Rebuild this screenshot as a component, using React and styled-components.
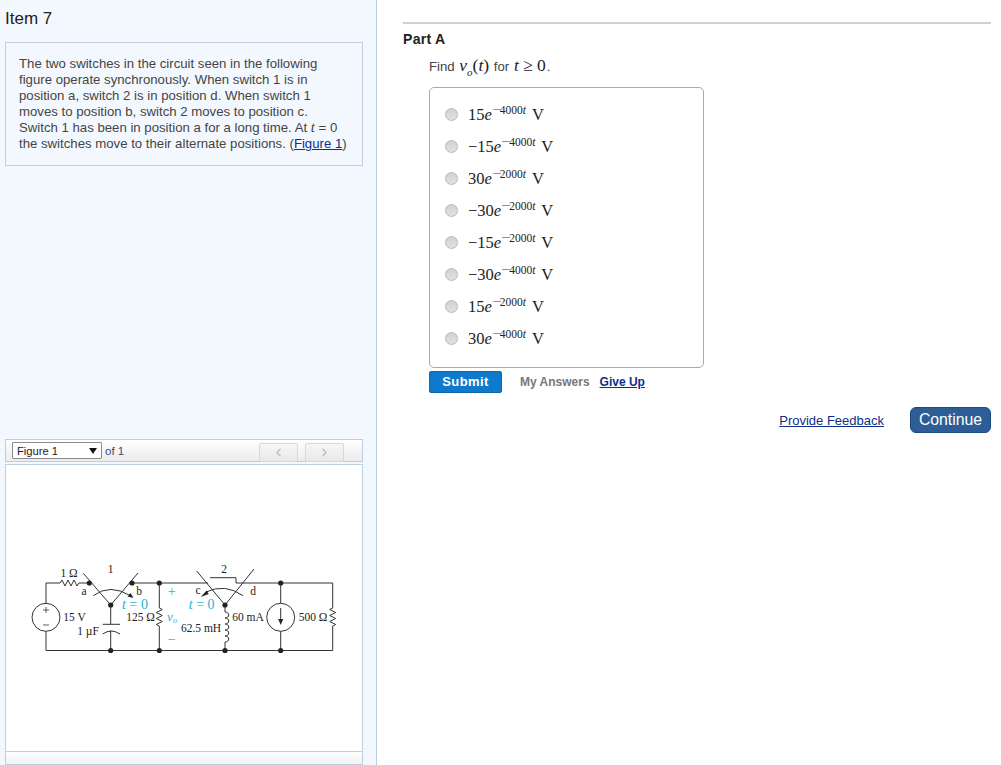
import React from "react";
import styled, { createGlobalStyle } from "styled-components";
import { ChevronLeft, ChevronRight } from "lucide-react";

const Global = createGlobalStyle`
  html, body { margin: 0; padding: 0; background: #fff; }
  body { font-family: "Liberation Sans", Arial, sans-serif; color: #333; }
`;

const Page = styled.div`
  display: flex;
  width: 1001px;
  height: 765px;
  overflow: hidden;
`;

const Sidebar = styled.aside`
  display: flex;
  flex-direction: column;
  flex: none;
  box-sizing: border-box;
  width: 377px;
  height: 765px;
  padding: 0 13px 0 5px;
  background: #f3f8ff;
  border-right: 1px solid #bccfe0;
  overflow: hidden;
`;

const ItemTitle = styled.h1`
  margin: 0;
  height: 42px;
  padding-top: 9px;
  box-sizing: border-box;
  font-size: 17px;
  line-height: 20px;
  font-weight: normal;
  color: #222;
`;

const ProblemBox = styled.div`
  box-sizing: border-box;
  height: 124px;
  padding: 13px 13px 0;
  border: 1px solid #bccfe0;
  font-size: 13.2px;
  line-height: 16px;
  color: #444;
  white-space: nowrap;
`;

const Link = styled.a`
  color: #0b2f8a;
  text-decoration: underline;
  font-weight: ${(p) => (p.$bold ? "bold" : "normal")};
  font-size: ${(p) => p.$size || "inherit"};
`;

const Toolbar = styled.div`
  display: flex;
  align-items: center;
  box-sizing: border-box;
  height: 23px;
  margin-top: 273px;
  padding: 0 0 0 6px;
  border: 1px solid #bccfe0;
  background: linear-gradient(#fff, #ececec);
  font-size: 11.5px;
  color: #3c4a78;
`;

const FigureSelect = styled.div`
  display: flex;
  align-items: center;
  justify-content: space-between;
  box-sizing: border-box;
  width: 90px;
  height: 17px;
  padding: 0 4px 0 4px;
  margin-right: 3px;
  background: #fff;
  border: 1px solid #8a8a8a;
  border-radius: 1px;
  color: #222;
  font-size: 11.2px;
`;

const Caret = styled.span`
  width: 0;
  height: 0;
  border-left: 4px solid transparent;
  border-right: 4px solid transparent;
  border-top: 6px solid #111;
`;

const Pager = styled.div`
  display: flex;
  gap: 7px;
  margin-left: auto;
  margin-right: 18px;
  align-self: flex-start;
  margin-top: 3px;
`;

const PagerButton = styled.div`
  display: flex;
  align-items: center;
  justify-content: center;
  box-sizing: border-box;
  width: 39px;
  height: 19px;
  border: 1px solid #d8d8d8;
  border-radius: 2px;
  background: linear-gradient(#f6f6f6, #e9e9e9);
  color: #bdbdbd;
`;

const FigurePanel = styled.div`
  display: flex;
  flex: none;
  box-sizing: border-box;
  height: 288px;
  margin-top: 2px;
  padding: 90px 0 0 24px;
  background: #fff;
  border: 1px solid #bccfe0;
`;

const FigureFooter = styled.div`
  flex: 1;
  border: 1px solid #bccfe0;
  border-top: none;
  background: linear-gradient(#fff, #f1f1f1);
`;

const Main = styled.main`
  flex: 1;
  min-width: 0;
  padding: 22px 10px 0 26px;
`;

const PartHeader = styled.h2`
  margin: 0;
  padding-top: 7px;
  border-top: 2px solid #cfcfcf;
  font-size: 14px;
  line-height: 16px;
  font-weight: bold;
  letter-spacing: 0.3px;
  color: #222;
`;

const Question = styled.div`
  margin-left: 26px;
`;

const Prompt = styled.p`
  margin: 8px 0 0;
  height: 20px;
  font-size: 13.2px;
  line-height: 20px;
  color: #444;
  white-space: nowrap;
`;

const MathText = styled.span`
  font-family: "Liberation Serif", "Times New Roman", serif;
  font-size: 17.5px;
  color: #222;
  margin: 0 1px;
`;

const MathVar = styled.i`
  font-family: "Liberation Serif", "Times New Roman", serif;
  font-size: 15px;
  line-height: 0;
`;

const Sub = styled.sub`
  font-size: 11px;
  line-height: 0;
  font-style: italic;
`;

const ChoiceBox = styled.div`
  display: flex;
  flex-direction: column;
  box-sizing: border-box;
  width: 275px;
  height: 281px;
  margin-top: 12px;
  padding: 10px 0 0 15px;
  background: #fff;
  border: 1px solid #aaa;
  border-radius: 5px;
`;

const Choice = styled.label`
  display: flex;
  align-items: center;
  height: 32px;
  gap: 10px;
`;

const Radio = styled.input.attrs({ type: "radio" })`
  appearance: none;
  flex: none;
  box-sizing: border-box;
  width: 13px;
  height: 13px;
  margin: 0;
  border: 1px solid #b9b9b9;
  border-radius: 50%;
  background: linear-gradient(#d2d2d2, #e2e2e2);
`;

const ChoiceMath = styled.span`
  padding-top: 2px;
  font-family: "Liberation Serif", "Times New Roman", serif;
  font-size: 16.5px;
  line-height: 20px;
  color: #222;
  white-space: nowrap;
`;

const Exponent = styled.sup`
  display: inline-block;
  font-size: 11.5px;
  line-height: 0;
  vertical-align: 6px;
  margin-right: 6px;
`;

const ExpMinus = styled.span`
  display: inline-block;
  width: 8px;
  font-size: 13px;
  color: #666;
  transform: scaleX(1.3);
  transform-origin: left center;
`;

const SubmitRow = styled.div`
  display: flex;
  align-items: center;
  height: 22px;
  margin-top: 3px;
`;

const SubmitButton = styled.button`
  box-sizing: border-box;
  width: 73px;
  height: 22px;
  padding: 0;
  border: 1px solid #0d68ad;
  border-radius: 2px;
  background: #0f7acb;
  color: #fff;
  font: bold 13px/20px "Liberation Sans", Arial, sans-serif;
  letter-spacing: 0.4px;
`;

const MyAnswers = styled.span`
  margin: 0 10px 0 18px;
  font-size: 12px;
  font-weight: bold;
  color: #777;
`;

const FooterRow = styled.div`
  display: flex;
  align-items: center;
  justify-content: flex-end;
  gap: 26px;
  height: 26px;
  margin-top: 14px;
`;

const ContinueButton = styled.button`
  box-sizing: border-box;
  width: 81px;
  height: 26px;
  padding: 0;
  border: 1px solid #1d4a80;
  border-radius: 6px;
  background: #2c5d96;
  color: #fff;
  font: 15.8px/24px "Liberation Sans", Arial, sans-serif;
`;

const T = ({ x, y, children, c = "#222", s = 11.5, i = false, a = "middle" }) => (
  <text x={x} y={y} fill={c} fontSize={s} textAnchor={a} fontStyle={i ? "italic" : "normal"} fontFamily='"Liberation Serif", serif'>
    {children}
  </text>
);

const Dot = ({ x, y }) => <circle cx={x} cy={y} r="2.6" fill="#222" stroke="none" />;

const Circuit = () => (
  <svg width="310" height="105" viewBox="30 555 310 105" fill="none" stroke="#333" strokeWidth="1">
    <path d="M46 603V583H60l2-3 3 6 3-6 3 6 3-6 3 6 2-3H89" />
    <path d="M46 631.500V650.500H332.700V626l3-1.500-6-3 6-3-6-3 6-3-6-3 3-1.500V583H236V577.700H210" />
    <path d="M132 583H208" />
    <circle cx="46" cy="617.300" r="14" />
    <path d="M43 610h6M46 607v6M43 625h6" strokeWidth="0.8" />
    <path d="M83.300 573.300L110.700 605L138 573" />
    <path d="M93.300 595.700Q110 583 131 596" />
    <path d="M133.500 598l-6-1.500 3-3.500z" fill="#222" stroke="none" />
    <path d="M110.700 605V624.300M102.700 624.300H120M102.700 634Q111 628 120 634M110.700 630.500V650" />
    <path d="M159.300 583V608l3 1.500-6 3 6 3-6 3 6 3-6 3 3 1.500V650" />
    <path d="M196.700 571L225 605L254 569" />
    <path d="M206 592Q225 583 243 595.700" />
    <path d="M200.700 597l6-6.500 2 3.500z" fill="#222" stroke="none" />
    <path d="M225 605V612c5 0 5 6 0 6c5 0 5 6 0 6c5 0 5 6 0 6c5 0 5 6 0 6c5 0 5 6 0 6V650" />
    <circle cx="280.700" cy="617.300" r="14" />
    <path d="M280.700 583V603.300M280.700 631.300V650M280.700 608V622" />
    <path d="M280.700 625l-2.500-6h5z" fill="#222" stroke="none" />
    <Dot x="89.300" y="583" />
    <Dot x="132" y="583" />
    <Dot x="110.700" y="605" />
    <Dot x="110.700" y="650.500" />
    <Dot x="159.300" y="583" />
    <Dot x="159.300" y="650.500" />
    <Dot x="225" y="605" />
    <Dot x="225" y="650.500" />
    <Dot x="280.700" y="583" />
    <Dot x="280.700" y="650.500" />
    <g stroke="none">
      <T x="69" y="577">1 Ω</T>
      <T x="84" y="595">a</T>
      <T x="110.700" y="573">1</T>
      <T x="139" y="595">b</T>
      <T x="224" y="573">2</T>
      <T x="198" y="594">c</T>
      <T x="253" y="595">d</T>
      <T x="135" y="609" c="#2ab0d8" s={14}><tspan fontStyle="italic">t</tspan> = 0</T>
      <T x="201.700" y="609" c="#2ab0d8" s={14}><tspan fontStyle="italic">t</tspan> = 0</T>
      <T x="74.500" y="621">15 V</T>
      <T x="88" y="635">1 µF</T>
      <T x="140.500" y="621">125 Ω</T>
      <T x="172" y="621" c="#2ab0d8" s={13} i>v<tspan fontSize="8" dy="2">o</tspan></T>
      <T x="171.700" y="596" c="#2ab0d8" s={14}>+</T>
      <T x="171.700" y="644" c="#2ab0d8" s={14}>−</T>
      <T x="201" y="632">62.5 mH</T>
      <T x="248" y="621">60 mA</T>
      <T x="313" y="621">500 Ω</T>
    </g>
  </svg>
);

const choices = [
  ["", "15", "4000"],
  ["−", "15", "4000"],
  ["", "30", "2000"],
  ["−", "30", "2000"],
  ["−", "15", "2000"],
  ["−", "30", "4000"],
  ["", "15", "2000"],
  ["", "30", "4000"],
];

export default function App() {
  return (
    <Page>
      <Global />
      <Sidebar>
        <ItemTitle>Item 7</ItemTitle>
        <ProblemBox>
          The two switches in the circuit seen in the following
          <br />
          figure operate synchronously. When switch 1 is in
          <br />
          position a, switch 2 is in position d. When switch 1
          <br />
          moves to position b, switch 2 moves to position c.
          <br />
          Switch 1 has been in position a for a long time. At <MathVar>t</MathVar> = 0
          <br />
          the switches move to their alternate positions. (<Link>Figure 1</Link>)
        </ProblemBox>
        <Toolbar>
          <FigureSelect>
            Figure 1
            <Caret />
          </FigureSelect>
          of 1
          <Pager>
            <PagerButton>
              <ChevronLeft size={13} strokeWidth={2.5} />
            </PagerButton>
            <PagerButton>
              <ChevronRight size={13} strokeWidth={2.5} />
            </PagerButton>
          </Pager>
        </Toolbar>
        <FigurePanel>
          <Circuit />
        </FigurePanel>
        <FigureFooter />
      </Sidebar>
      <Main>
        <PartHeader>Part A</PartHeader>
        <Question>
          <Prompt>
            Find{" "}
            <MathText>
              <i>v</i>
              <Sub>o</Sub>(<i>t</i>)
            </MathText>{" "}
            for{" "}
            <MathText>
              <i>t</i> ≥ 0
            </MathText>
            .
          </Prompt>
          <ChoiceBox>
            {choices.map(([sign, coeff, exp], idx) => (
              <Choice key={idx}>
                <Radio name="answer" />
                <ChoiceMath>
                  {sign}
                  {coeff}
                  <i>e</i>
                  <Exponent>
                    <ExpMinus>−</ExpMinus>
                    {exp}
                    <i>t</i>
                  </Exponent>
                  V
                </ChoiceMath>
              </Choice>
            ))}
          </ChoiceBox>
          <SubmitRow>
            <SubmitButton>Submit</SubmitButton>
            <MyAnswers>My Answers</MyAnswers>
            <Link $bold $size="12px">Give Up</Link>
          </SubmitRow>
          <FooterRow>
            <Link $size="13px">Provide Feedback</Link>
            <ContinueButton>Continue</ContinueButton>
          </FooterRow>
        </Question>
      </Main>
    </Page>
  );
}
